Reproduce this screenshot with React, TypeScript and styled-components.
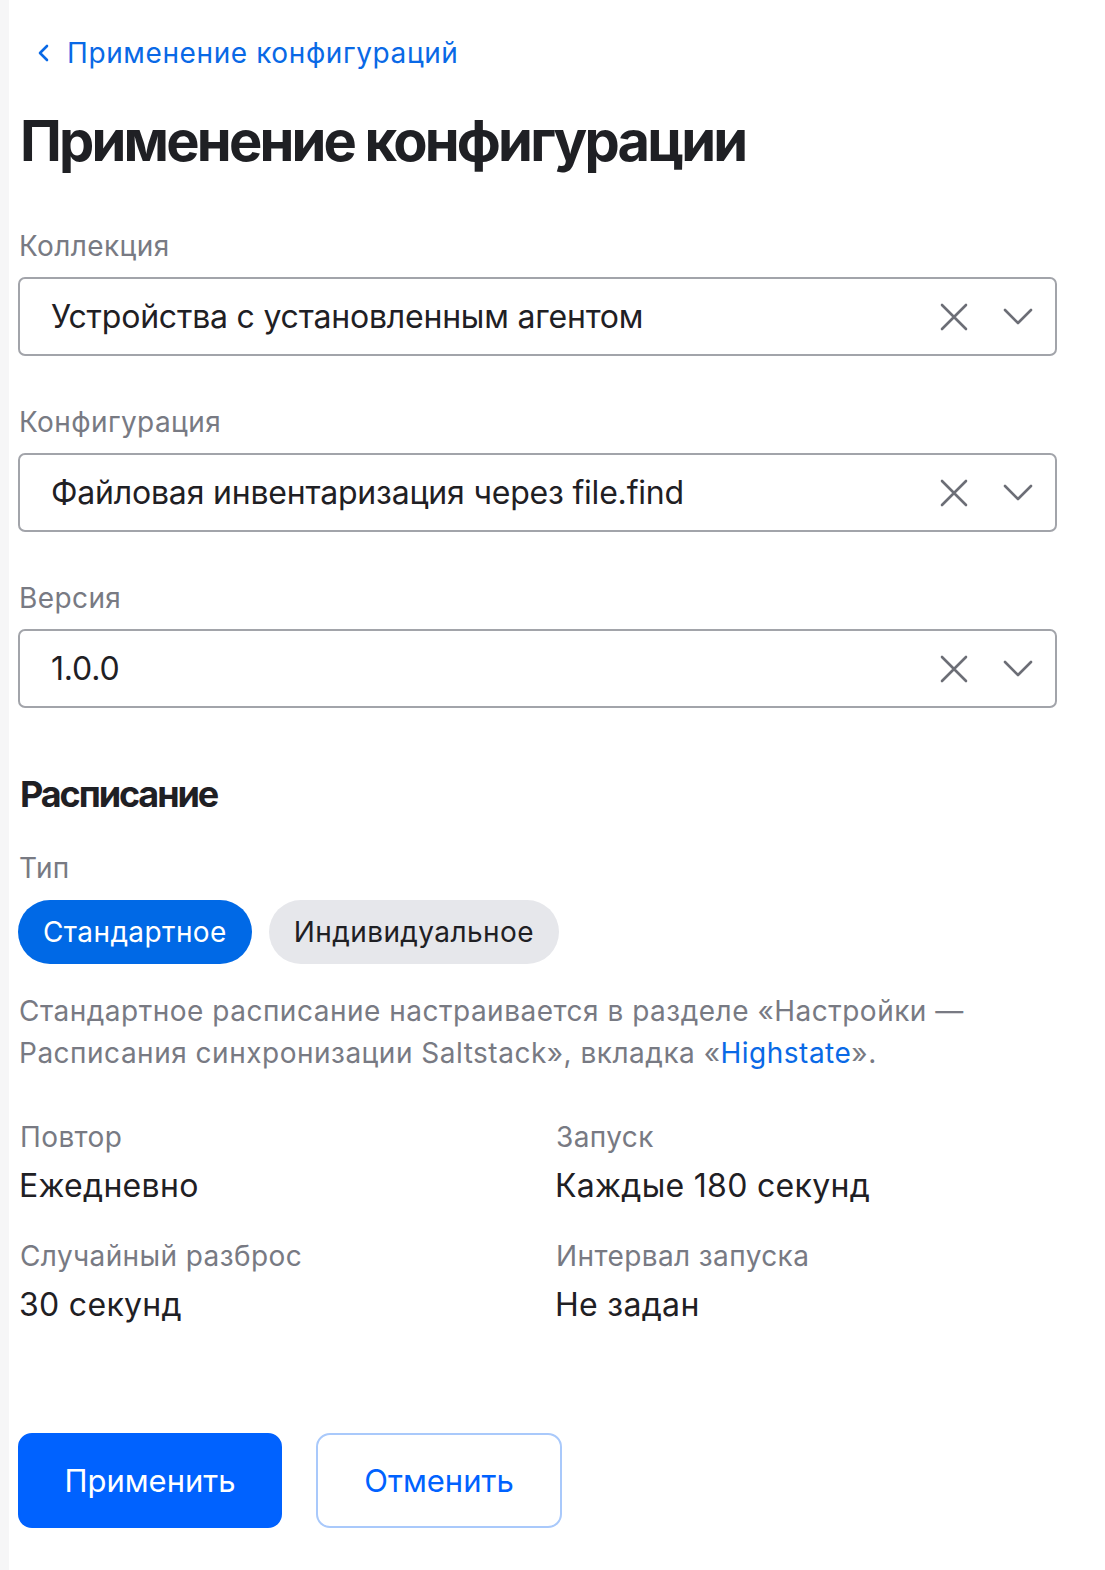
import styled, { createGlobalStyle } from "styled-components";

const GlobalStyle = createGlobalStyle`
  html, body {
    margin: 0;
    padding: 0;
    background: #f6f6f7;
  }
  body {
    font-family: Inter, "Noto Sans", "Liberation Sans", sans-serif;
    color: #1f2024;
  }
`;

const Page = styled.div`
  margin-left: 9px;
  background: #ffffff;
  min-height: 1570px;
  padding: 33px 0 0 9px;
  box-sizing: border-box;
  width: 1096px;
`;

const Back = styled.a`
  display: inline-flex;
  align-items: center;
  gap: 18px;
  margin-left: 19px;
  color: #0969e6;
  font-size: 28px;
  line-height: 40px;
  letter-spacing: 0.6px;
  text-decoration: none;
`;

const Title = styled.h1`
  margin: 34px 0 0 2px;
  font-size: 56px;
  line-height: 68px;
  font-weight: 700;
  letter-spacing: -2.8px;
  color: #1f2024;
`;

const Field = styled.div<{ $top: number; $gap?: number }>`
  display: flex;
  flex-direction: column;
  gap: ${(p) => p.$gap ?? 14}px;
  margin-top: ${(p) => p.$top}px;
  width: 1039px;
`;

const Label = styled.div`
  font-size: 28px;
  line-height: 34px;
  color: #787a83;
  letter-spacing: 0.4px;
  margin-left: 1px;
`;

const Select = styled.div`
  display: flex;
  align-items: center;
  height: 79px;
  box-sizing: border-box;
  border: 2px solid #a2a4aa;
  border-radius: 7px;
  padding: 0 17px 0 31px;
`;

const SelectValue = styled.div`
  flex: 1;
  font-size: 32px;
  color: #1f2024;
  letter-spacing: -0.2px;
`;

const IconButton = styled.span<{ $gap: number }>`
  display: flex;
  width: 40px;
  height: 40px;
  align-items: center;
  justify-content: center;
  margin-left: ${(p) => p.$gap}px;
`;

const SectionTitle = styled.h2`
  margin: 63px 0 0 2px;
  font-size: 36px;
  line-height: 46px;
  font-weight: 700;
  letter-spacing: -2.1px;
  color: #1f2024;
`;

const Pills = styled.div`
  display: flex;
  gap: 17px;
`;

const Pill = styled.button<{ $active?: boolean }>`
  height: 64px;
  border: none;
  border-radius: 32px;
  padding: 0 25px;
  font-family: inherit;
  font-size: 28px;
  letter-spacing: 0.4px;
  background: ${(p) => (p.$active ? "#0069e6" : "#e6e7eb")};
  color: ${(p) => (p.$active ? "#ffffff" : "#1f2024")};
`;

const Note = styled.p`
  margin: 26px 0 0 1px;
  font-size: 28px;
  line-height: 42px;
  color: #787a83;
  letter-spacing: 0.5px;
  width: 1000px;
`;

const Link = styled.a`
  color: #0969e6;
  text-decoration: none;
`;

const InfoGrid = styled.div`
  display: grid;
  grid-template-columns: 536px 1fr;
  row-gap: 33px;
  margin-top: 46px;
  margin-left: 1px;
`;

const Info = styled.div`
  display: flex;
  flex-direction: column;
  gap: 12px;
`;

const InfoValue = styled.div`
  font-size: 32px;
  line-height: 40px;
  color: #1f2024;
  letter-spacing: 0.3px;
`;

const Actions = styled.div`
  display: flex;
  gap: 34px;
  margin-top: 108px;
`;

const Button = styled.button<{ $primary?: boolean }>`
  height: 95px;
  box-sizing: border-box;
  border-radius: 14px;
  font-family: inherit;
  font-size: 31px;
  letter-spacing: 0;
  padding: 0;
  width: ${(p) => (p.$primary ? 264 : 246)}px;
  background: ${(p) => (p.$primary ? "#0062ff" : "#ffffff")};
  color: ${(p) => (p.$primary ? "#ffffff" : "#0062ff")};
  border: 2px solid ${(p) => (p.$primary ? "#0062ff" : "#a9c9fb")};
`;

const ClearIcon = () => (
  <svg width="30" height="30" viewBox="0 0 30 30" fill="none">
    <path d="M3 3 L27 27 M27 3 L3 27" stroke="#6c6e76" strokeWidth="2.6" strokeLinecap="round" />
  </svg>
);

const ChevronDown = () => (
  <svg width="30" height="18" viewBox="0 0 30 18" fill="none">
    <path d="M2 2 L15 15 L28 2" stroke="#6c6e76" strokeWidth="2.6" strokeLinecap="round" strokeLinejoin="round" />
  </svg>
);

const ChevronLeft = () => (
  <svg width="12" height="18" viewBox="0 0 12 18" fill="none">
    <path d="M10 2 L3 9 L10 16" stroke="#0969e6" strokeWidth="2.6" strokeLinecap="round" strokeLinejoin="round" />
  </svg>
);

const fields = [
  { label: "Коллекция", value: "Устройства с установленным агентом", top: 54 },
  { label: "Конфигурация", value: "Файловая инвентаризация через file.find", top: 49 },
  { label: "Версия", value: "1.0.0", top: 49 },
];

const info = [
  { label: "Повтор", value: "Ежедневно" },
  { label: "Запуск", value: "Каждые 180 секунд" },
  { label: "Случайный разброс", value: "30 секунд" },
  { label: "Интервал запуска", value: "Не задан" },
];

const App = () => {
  return (
    <>
      <GlobalStyle />
      <Page>
        <Back href="#">
          <ChevronLeft />
          Применение конфигураций
        </Back>
        <Title>Применение конфигурации</Title>
        {fields.map((f) => (
          <Field key={f.label} $top={f.top}>
            <Label>{f.label}</Label>
            <Select>
              <SelectValue>{f.value}</SelectValue>
              <IconButton $gap={0}>
                <ClearIcon />
              </IconButton>
              <IconButton $gap={24}>
                <ChevronDown />
              </IconButton>
            </Select>
          </Field>
        ))}
        <SectionTitle>Расписание</SectionTitle>
        <Field $top={34} $gap={15}>
          <Label>Тип</Label>
          <Pills>
            <Pill $active>Стандартное</Pill>
            <Pill>Индивидуальное</Pill>
          </Pills>
        </Field>
        <Note>
          Стандартное расписание настраивается в разделе «Настройки —
          <br />
          Расписания синхронизации Saltstack», вкладка «<Link href="#">Highstate</Link>».
        </Note>
        <InfoGrid>
          {info.map((i) => (
            <Info key={i.label}>
              <Label>{i.label}</Label>
              <InfoValue>{i.value}</InfoValue>
            </Info>
          ))}
        </InfoGrid>
        <Actions>
          <Button $primary>Применить</Button>
          <Button>Отменить</Button>
        </Actions>
      </Page>
    </>
  );
};

export default App;
